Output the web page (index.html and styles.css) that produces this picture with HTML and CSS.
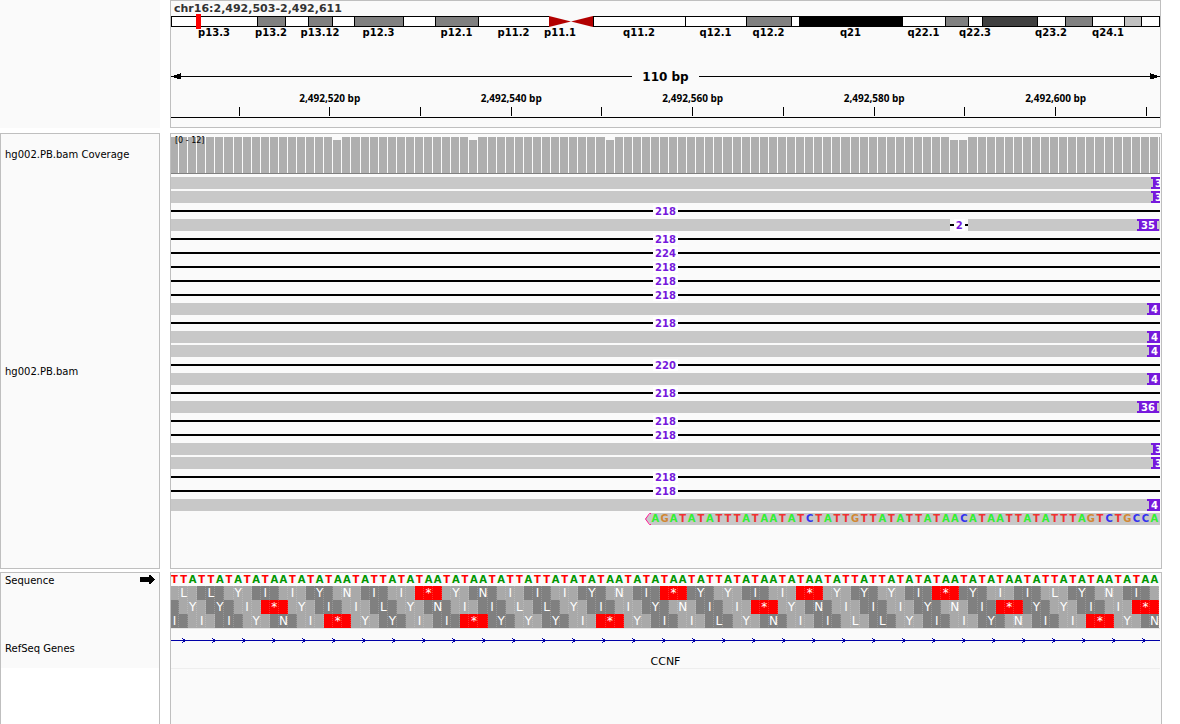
FILE: index.html
```html
<!DOCTYPE html>
<html lang="en">
<head>
<meta charset="utf-8">
<title>chr16:2,492,503-2,492,611</title>
<link rel="stylesheet" href="styles.css">
</head>
<body>
<main class="browser">
  <div class="name-head"></div>
  <header class="panel head">
    <h1 class="locus">chr16:2,492,503-2,492,611</h1>
    <div class="ideogram" id="ideogram"></div>
    <div class="span">
      <svg class="arrow" viewBox="0 0 11 7" aria-hidden="true"><path d="M0 3h3V2h3V1h3V0h1v3h1v1h-1v2H6V5H3V4H0z"/></svg>
      <span class="span-line"></span>
      <span class="span-text">110 bp</span>
      <span class="span-line"></span>
      <svg class="arrow arrow-right" viewBox="0 0 11 7" aria-hidden="true"><path d="M0 3h3V2h3V1h3V0h1v3h1v1h-1v2H6V5H3V4H0z"/></svg>
    </div>
    <div class="ruler" id="ruler"></div>
  </header>

  <div class="panel names">
    <div class="name name-coverage">hg002.PB.bam Coverage</div>
    <div class="name name-reads">hg002.PB.bam</div>
  </div>
  <section class="panel tracks">
    <div class="coverage bases" id="coverage"><span class="range">[0 - 12]</span></div>
    <div class="reads" id="reads"></div>
  </section>

  <div class="panel names names-last">
    <div class="name name-sequence">Sequence
      <svg class="strand" viewBox="0 0 15 9" aria-hidden="true"><path d="M0 2h9V0h2v1h1v1h1v1h1v1h1v1h-1v1h-1v1h-1v1h-1v1H9V7H0z"/></svg>
    </div>
    <div class="name name-genes">RefSeq Genes</div>
  </div>
  <section class="panel tracks tracks-last">
    <div class="sequence bases" id="sequence"></div>
    <div class="frames" id="frames"></div>
    <div class="genes">
      <svg class="gene" width="100%" height="7" aria-hidden="true">
        <defs>
          <pattern id="chevrons" width="30" height="7" patternUnits="userSpaceOnUse">
            <path d="M0 3h30v1H0zM11 1h1v1h1v3h-1v1h-1V5h1V2h-1zM13 2h1v3h-1z" fill="#0000a8"/>
          </pattern>
        </defs>
        <rect width="100%" height="7" fill="url(#chevrons)"/>
      </svg>
      <span class="gene-name">CCNF</span>
    </div>
  </section>
</main>
<script src="app.js"></script>
</body>
</html>
```
FILE: styles.css
```css
* { box-sizing: border-box; }

body {
  margin: 0;
  background: #fff;
  color: #000;
  font-family: "DejaVu Sans", sans-serif;
  font-size: 10px;
}

.browser {
  display: grid;
  grid-template-columns: 160px minmax(0, 1fr);
  grid-template-rows: auto auto 1fr;
  column-gap: 10px;
  min-height: 100vh;
  padding-right: 18px;
}

.panel { border: 1px solid #bfbfbf; background: #fafafa; }
.name-head { background: #fafafa; margin-bottom: 5px; }
.head { margin: 0 1px 5px 0; padding-bottom: 9px; }
.names, .tracks { margin-bottom: 3px; }
.names { display: flex; flex-direction: column; }
.tracks { padding-right: 1px; overflow: hidden; }
.names-last, .tracks-last { margin-bottom: 0; border-bottom: 0; }
.names-last { background: #fff; }

/* header */
.locus {
  margin: 0;
  padding-left: 3px;
  font-size: 11px;
  line-height: 15px;
  font-weight: bold;
  color: #333;
}
.ideogram {
  display: flex;
  position: relative;
  height: 11px;
  border-right: 1px solid #000;
}
.band {
  display: flex;
  flex-direction: column;
  align-items: center;
  flex-basis: 0;
  min-width: 0;
  white-space: nowrap;
}
.band-fill {
  flex: 0 0 11px;
  width: 100%;
  border: 1px solid #000;
  border-right: 0;
  background: #fff;
}
.gray .band-fill { background: #808080; }
.dark .band-fill { background: #404040; }
.light .band-fill { background: #c0c0c0; }
.black .band-fill { background: #000; }
.cen-left .band-fill, .cen-right .band-fill { border: 0; background: #b20000; }
.cen-left .band-fill { clip-path: polygon(0 0, 100% 50%, 0 100%); }
.cen-right .band-fill { clip-path: polygon(100% 0, 0 50%, 100% 100%); }
.band-name { font-size: 10px; line-height: 12px; font-weight: bold; }
.view-mark {
  position: absolute;
  left: 2.5%;
  top: -2px;
  width: 5px;
  height: 15px;
  background: #f00;
}
.span { display: flex; align-items: center; margin-top: 42px; height: 15px; }
.span-line { flex: 1; height: 1px; background: #000; }
.span-text { padding: 2px 10px 0; font-size: 12px; line-height: 15px; font-weight: bold; }
.arrow { width: 11px; height: 7px; }
.arrow-right { transform: scaleX(-1); }
.ruler {
  display: grid;
  grid-template-columns: repeat(109, minmax(0, 1fr));
  margin-top: 7px;
  border-bottom: 1px solid #000;
  padding-bottom: 1px;
}
.tick { display: flex; flex-direction: column; align-items: center; white-space: nowrap; }
.tick-name {
  height: 16px;
  font-family: "Open Sans", sans-serif;
  font-size: 10px;
  line-height: 14px;
  font-weight: bold;
}
.tick-mark { width: 1px; height: 9px; background: #000; }

/* track names */
.name { display: flex; align-items: center; padding-left: 4px; background: #fafafa; }
.name-coverage { height: 40px; }
.name-reads { flex: 1; }
.name-sequence { height: 55px; align-items: flex-start; line-height: 15px; }
.name-genes { height: 40px; }
.strand { width: 15px; height: 9px; margin: 2px 4px 0 auto; }

/* one column for each base */
.bases {
  display: grid;
  grid-template-columns: repeat(109, minmax(0, 1fr)) 1px;
  margin-left: -1px;
}
.coverage {
  position: relative;
  height: 40px;
  padding-top: 3px;
  border-bottom: 1px solid #808080;
}
.bar { margin-right: 1px; background: #afafaf; }
.bar-low { margin-top: 3px; }
.bar-last { margin-right: 0; }
.range { position: absolute; left: 5px; top: 1px; font-size: 8px; line-height: 12px; }

/* reads */
.reads {
  display: flex;
  flex-direction: column;
  gap: 2px;
  padding: 3px 0 43px;
}
.read { position: relative; height: 12px; font-weight: bold; }
.aligned { display: flex; justify-content: flex-end; background: #c8c8c8; overflow: hidden; }
.gap { display: flex; align-items: center; color: #7618dc; }
.gap::before, .gap::after { content: ""; flex: 1; height: 2px; background: #000; }
.gap-size { height: 12px; padding: 0 2px; background: #fff; line-height: 13px; }
.insertion {
  width: 22px;
  height: 12px;
  margin-right: 1px;
  padding-left: 2px;
  color: #fff;
  border: solid #7618dc;
  border-width: 2px 0;
  line-height: 9px;
}
.insertion span { display: block; width: 18px; height: 8px; padding-left: 2px; background: #7618dc; }
.cut-2 { width: 13px; margin-right: 0; }
.cut-2 span { width: 11px; }
.cut-3 { width: 9px; margin-right: 0; }
.deletion {
  position: absolute;
  left: 78.8%;
  width: 18px;
  height: 12px;
  background: #fafafa;
}
.mismatch-row { height: 12px; line-height: 12px; font-weight: bold; }
.read-body { grid-row: 1; background: #c8c8c8; position: relative; }
.read-tip { position: absolute; right: 100%; top: 0; width: 6px; height: 12px; }
.mismatch-row .base { grid-row: 1; z-index: 1; }
.mismatch-row .A { color: #32f032; }
.mismatch-row .T { color: #f03232; }
.mismatch-row .G { color: #d28732; }
.mismatch-row .C { color: #3232f0; }
.base { display: flex; justify-content: center; }

/* sequence */
.sequence { height: 13px; line-height: 14px; font-weight: bold; }
.sequence .A { color: #009600; }
.sequence .T { color: #f00; }
.frames { position: relative; border-bottom: 1px solid #e6e6e6; }
.frame { height: 14px; color: #fff; font-size: 12px; line-height: 14px; }
.codon { display: flex; justify-content: center; background: #a9a9a9; }
.codon-odd { background: #808080; }
.codon-stop { background: #f00; }
.codon span { flex: none; width: 100%; text-align: center; }
.codon-start { justify-content: flex-end; }
.codon-end { justify-content: flex-start; }
.codon-start span, .codon-end span { width: 150%; }
.rules { position: absolute; inset: 0 0 1px 0; }
.rule { border-right: 1px dotted #ffffff30; }

/* genes */
.genes {
  display: flex;
  flex-direction: column;
  align-items: center;
  height: 40px;
  padding-top: 8px;
  border-bottom: 1px solid #eee;
}
.gene { display: block; flex: none; }
.gene-name { margin-top: 11px; font-size: 11px; line-height: 14px; }
```
FILE: app.js
```js
const BASES = 109;
const FIRST = 503;

function add(parent, className, text, tag = "div") {
  const el = document.createElement(tag);
  el.className = className;
  if (text) el.textContent = text;
  parent.appendChild(el);
  return el;
}

// Chromosome bands: relative length, stain, name.
const bands = [
  [86, "", "p13.3"], [28, "gray", "p13.2"], [23, "", ""], [24, "gray", "p13.12"],
  [22, "", ""], [49, "gray", "p12.3"], [32, "", ""], [43, "gray", "p12.1"],
  [71, "", "p11.2"], [22, "cen-left", "p11.1"], [22, "cen-right", ""],
  [92, "", "q11.2"], [61, "", "q12.1"], [45, "gray", "q12.2"], [8, "", ""],
  [103, "black", "q21"], [43, "", "q22.1"], [23, "gray", ""], [14, "", "q22.3"],
  [55, "dark", ""], [28, "", "q23.2"], [27, "gray", ""], [32, "", "q24.1"],
  [17, "light", ""], [18, "", ""]
];
const ideogram = document.getElementById("ideogram");
for (const [size, stain, name] of bands) {
  const band = add(ideogram, "band " + stain);
  band.style.flexGrow = size;
  add(band, "band-fill");
  if (name) add(band, "band-name", name);
}
add(ideogram, "view-mark");

const ruler = document.getElementById("ruler");
for (let pos = 510; pos <= 610; pos += 10) {
  const tick = add(ruler, "tick");
  tick.style.gridColumn = pos - FIRST + 1;
  add(tick, "tick-name", pos % 20 === 0 ? "2,492," + pos + " bp" : "");
  add(tick, "tick-mark");
}

const coverage = document.getElementById("coverage");
const low = [18, 33, 48, 86, 87];
for (let i = 0; i <= BASES; i++) {
  add(coverage, "bar" + (low.includes(i) ? " bar-low" : "") + (i === BASES ? " bar-last" : ""));
}

// A number is a gap through the whole view.
// A list is an aligned read: insertion size at its right end, class, deletion size.
const long = ["3", "cut-3"];
const mid = ["4", "cut-2"];
const rows = [
  long, long, 218, ["35", "", "2"], 218, 224, 218, 218, 218, mid, 218, mid, mid,
  220, mid, 218, ["36", ""], 218, 218, long, long, 218, 218, mid
];
const reads = document.getElementById("reads");
for (const row of rows) {
  if (typeof row === "number") {
    add(add(reads, "read gap"), "gap-size", String(row));
    continue;
  }
  const read = add(reads, "read aligned");
  add(add(read, "insertion " + row[1]), "", row[0], "span");
  if (row[2]) add(add(read, "deletion gap"), "gap-size", row[2]);
}

const clipped = "AGATATATTTATAATATCTATTGTTATAT" + "TATAACATAATTATATTTAGTCTGCCA";
const clipStart = BASES - clipped.length;
const clipRow = add(reads, "mismatch-row bases");
const body = add(clipRow, "read-body");
body.style.gridColumn = (clipStart + 1) + " / -1";
body.innerHTML = '<svg class="read-tip" viewBox="0 0 6 12"><path d="M6 0L0 6l6 6z" fill="#c8c8c8"/><path d="M6 .5H4.500L.5 6l4 5.500H6" fill="none" stroke="#ff1493"/></svg>';
[...clipped].forEach((b, i) => {
  add(clipRow, "base " + b, b).style.gridColumn = clipStart + i + 1;
});

const seq =
  "TTATTATATATAATATATAATATTATATAATATAATATTATTATATATAATATA" +
  "TAATATTATATAATATAATATTATTATATATAATATATAATATTATATAATATAA";
const sequence = document.getElementById("sequence");
for (const b of seq) add(sequence, "base " + b, b);

const amino = { TTA: "L", TAT: "Y", ATA: "I", AAT: "N", ATT: "I", TAA: "*" };
const context = "A" + seq + "T";
const frames = document.getElementById("frames");
for (const start of [0, -2, -1]) {
  const frame = add(frames, "frame bases");
  for (let s = start, k = start < 0 ? 1 : 0; s < BASES; s += 3, k++) {
    const triplet = s < -1 ? "" : context.slice(s + 1, s + 4);
    const aa = amino[triplet] || "";
    let kind = aa === "*" ? " codon-stop" : k % 2 ? " codon-odd" : "";
    if (s === -1) kind += " codon-start";
    if (s === BASES - 2) kind += " codon-end";
    const codon = add(frame, "codon" + kind);
    codon.style.gridColumn = Math.max(1, s + 1) + " / " + Math.min(BASES + 1, s + 4);
    if (aa) add(codon, "", aa, "span");
  }
}
const rules = add(frames, "rules bases");
for (let i = 0; i < BASES; i++) add(rules, "rule");
```
